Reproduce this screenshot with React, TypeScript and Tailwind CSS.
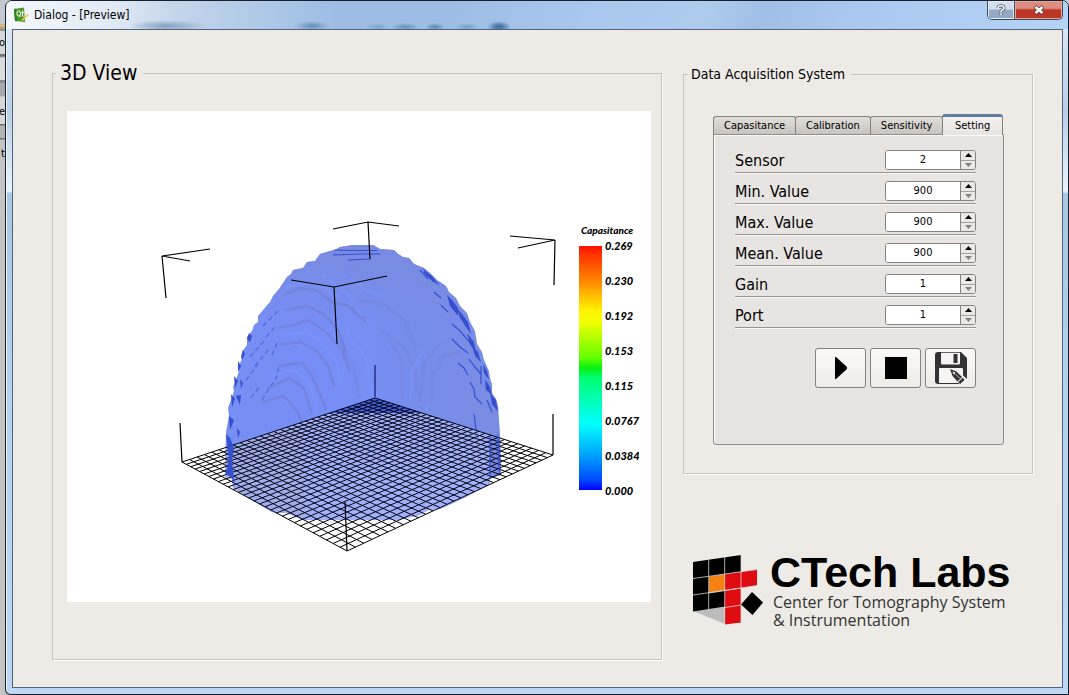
import { useState } from "react";

type Point = [number, number];

const CELLS = 30;
const FLOOR: [Point, Point, Point, Point] = [
  [375, 398],
  [553, 455],
  [347, 551],
  [182, 462],
];

/** Maps the unit square onto the floor quad with perspective. */
function project(u: number, v: number): Point {
  const [[x0, y0], [x1, y1], [x2, y2], [x3, y3]] = FLOOR;
  const dx1 = x1 - x2;
  const dx2 = x3 - x2;
  const sx = x0 - x1 + x2 - x3;
  const dy1 = y1 - y2;
  const dy2 = y3 - y2;
  const sy = y0 - y1 + y2 - y3;
  const det = dx1 * dy2 - dx2 * dy1;
  const g = (sx * dy2 - dx2 * sy) / det;
  const h = (dx1 * sy - sx * dy1) / det;
  const w = g * u + h * v + 1;
  return [
    ((x1 - x0 + g * x1) * u + (x3 - x0 + h * x3) * v + x0) / w,
    ((y1 - y0 + g * y1) * u + (y3 - y0 + h * y3) * v + y0) / w,
  ];
}

const segment = (a: Point, b: Point) =>
  `M${a[0].toFixed(1)} ${a[1].toFixed(1)}L${b[0].toFixed(1)} ${b[1].toFixed(1)}`;

const gridPath = Array.from({ length: CELLS + 1 }, (_, i) => {
  const t = i / CELLS;
  return segment(project(t, 0), project(t, 1)) + segment(project(0, t), project(1, t));
}).join("");

const DOME =
  "M226 432L229 416L228 408L231 400L234 391L233 387L236 380L239 371L238 367L242 359L244 349L247 345L247 337L252 331L254 325L258 322L258 316L264 309L270 302L273 296L279 289L283 283L287 277L291 274L293 270L303 268L307 262L315 261L320 254L330 251L335 250L340 247L353 245H373L380 249L394 250L398 254L403 257L409 258L414 264L424 268L430 273L437 280L446 286L449 292L456 298L460 306L467 313L470 322L475 331L477 344L482 352L484 360L489 371L490 378L492 384V393L496 399L498 406L499 420L500 434L501 475L490 478V484L464 498L440 509L428 510L420 515L402 519L400 520H303L287 513L272 512L250 499L233 488L232 479L225 477Z";

const SCALE = ["0.269", "0.230", "0.192", "0.153", "0.115", "0.0767", "0.0384", "0.000"];

function VolumeView() {
  return (
    <svg viewBox="67 111 584 491" role="img" aria-label="Capasitance volume" className="block h-auto w-full bg-white">
      <defs>
        <linearGradient id="dome" x1="0" y1="0" x2="1" y2="0">
          <stop offset="0" stopColor="#8298f6" />
          <stop offset="0.35" stopColor="#8298fc" />
          <stop offset="0.6" stopColor="#8298f2" />
          <stop offset="1" stopColor="#8596e2" />
        </linearGradient>
        <linearGradient id="cap" x1="0" y1="0" x2="0" y2="1">
          <stop offset="0" stopColor="#8494de" stopOpacity="1" />
          <stop offset="1" stopColor="#8494de" stopOpacity="0" />
        </linearGradient>
        <linearGradient id="scale" x1="0" y1="0" x2="0" y2="1">
          <stop offset="0" stopColor="#ff1000" />
          <stop offset="0.04" stopColor="#ff3800" />
          <stop offset="0.15" stopColor="#ff8c00" />
          <stop offset="0.26" stopColor="#fff000" />
          <stop offset="0.31" stopColor="#f4ff00" />
          <stop offset="0.46" stopColor="#60ff00" />
          <stop offset="0.5" stopColor="#08f010" />
          <stop offset="0.54" stopColor="#00ff70" />
          <stop offset="0.73" stopColor="#00ffff" />
          <stop offset="0.86" stopColor="#00a0ff" />
          <stop offset="0.96" stopColor="#0048ff" />
          <stop offset="1" stopColor="#0000ff" />
        </linearGradient>
        <clipPath id="domeClip">
          <path d={DOME} />
        </clipPath>
      </defs>

      <g clipPath="url(#domeClip)">
        <rect x="220" y="240" width="285" height="285" fill="url(#dome)" />
        <rect x="220" y="240" width="285" height="90" fill="url(#cap)" />
        <g fill="none" stroke="#7c86cc" strokeOpacity="0.6" strokeWidth="2.500" strokeLinejoin="round">
          <path d="M286 294L300 288L318 291L332 302L348 306L366 322" />
          <path d="M286 310L306 306L324 314L338 330L346 352" />
          <path d="M278 328L294 325L308 320L326 332L342 350L350 372" />
          <path d="M279 345L300 342L316 350L328 366L334 386" />
          <path d="M278 366L302 363L312 376L320 394L326 410" />
          <path d="M268 388L290 378L304 388L312 414" />
          <path d="M262 402L284 396L298 412L304 428" />
        </g>
        <g fill="none" stroke="#7c88d0" strokeOpacity="0.3" strokeWidth="4" strokeLinejoin="round">
          <path d="M360 300L384 304L404 320L416 348" />
          <path d="M380 330L402 344L414 368L418 396" />
          <path d="M432 404V376L444 356L462 352" />
          <path d="M420 402L424 364L440 342" />
          <path d="M402 398V360L388 338" />
          <path d="M360 398L354 370L340 340" />
        </g>
        <g fill="none" stroke="#869cff" strokeOpacity="0.6" strokeWidth="3">
          <path d="M286 288L304 282L322 286L340 298" />
          <path d="M280 336L306 332L322 342L336 360L342 386" />
          <path d="M272 376L294 370L308 382L316 404" />
          <path d="M322 274L336 284L352 300L362 316" />
          <path d="M350 278L366 290L384 296" />
          <path d="M348 334L366 358L372 392" />
          <path d="M410 400L412 372L424 350" />
        </g>
        <path d="M220 449L230 446L330 413H422L500 438L510 530H220Z" fill="#b2befd" />
        <path d="M230 446L300 423L306 520L260 512L230 488Z" fill="#b0b9e0" fillOpacity="0.6" />
        <path d="M375 398L330 413H422Z" fill="#4c66e0" />
        <path d="M489 434L501 438V476L489 479Z" fill="#8494e8" />
      </g>

      <path d={gridPath} fill="none" stroke="#000" />
      <path d={DOME} fill="#2038e0" fillOpacity="0.1" />

      <g fill="none" stroke="#3450d0" strokeWidth="1.2">
        <path d="M334 250L350 250.500H377M333 255L358 254H380M348 260L370 259" />
        <path d="M420 270L428 279M424 272L434 282M434 292L441 298M441 305L448 312M452 324L460 331L467 339L474 349M452 339L460 347L468 353M458 363L464 368L468 375M469 359L475 367L481 374M470 382L474 389L475 397L482 404M481 366V384M487 400L492 412M474 414L476 430" />
        <path
          d="M262 400L268 390L276 379L279 366M250 357L264 341M255 366L268 350M246 380L258 364M263 326L278 311M266 337L276 326M251 398L260 386M272 355L278 341"
          strokeDasharray="5 3"
          strokeOpacity="0.6"
        />
      </g>
      <g fill="#3450d0">
        <path d="M447 295L452 300L458 308V316L450 306ZM457 308L462 314L468 322L471 334L466 327L460 318ZM467 333L474 342L476 352L470 344ZM472 346L478 352L481 362L475 356Z" />
        <path d="M483 364L487 371L489 380L484 373ZM485 379L490 387L492 395L486 390ZM490 393L496 400L498 412L492 404ZM422 268L432 276L440 286L430 279Z" />
        <path d="M249 333L252 336L250 342L247 339ZM243 349L245 354L242 360L241 357ZM238 361L241 366L238 372ZM234 376L238 381L235 388ZM240 379L243 383L241 389ZM231 394L235 399L232 407ZM236 396L241 395L240 405ZM229 416L234 420L230 430ZM237 428L240 432L238 438Z" />
        <path d="M226 434L230 438L234 448L232 462L235 487L232 478L226 474L229 458Z" />
        <path d="M489 436L491 438V478H489ZM497 432L500 440V474L498 470Z" fillOpacity="0.6" />
      </g>

      <path
        d="M210 249L162 256L190 261M162 256L166 298M333 229L368 222L399 226M368 222L370 259M510 236L555 240L518 248M555 240L554 285M291 280L334 287L387 276M334 287L337 344M180 423L182 462M553 414V455M345 502L347 551"
        fill="none"
        stroke="#000"
        strokeWidth="1.200"
      />
      <path d="M375 365V397" stroke="#10186c" strokeWidth="1.200" />

      <rect x="579" y="246" width="23" height="244" fill="url(#scale)" />
      <g fill="#000" className="font-['Lato',sans-serif] font-black italic">
        <text x="581" y="234" fontSize="10">
          Capasitance
        </text>
        {SCALE.map((value, i) => (
          <text key={value} x="605" y={250 + i * 35} fontSize="11">
            {value}
          </text>
        ))}
      </g>
    </svg>
  );
}

function SpinRow({ label, initial }: { label: string; initial: number }) {
  const [value, setValue] = useState(initial);
  const id = label.toLowerCase().replace(/\W+/g, "-");
  return (
    <div className="flex h-[31px] items-end justify-between border-b border-[#989490] pb-[2px] shadow-[0_1px_0_#fbfaf9]">
      <label htmlFor={id} className="text-base leading-[18px]">
        {label}
      </label>
      <div className="flex h-5 w-[91px] overflow-hidden rounded-[3px] border border-[#85817c] bg-white">
        <input
          id={id}
          type="number"
          value={value}
          onChange={(e) => setValue(Number(e.target.value))}
          className="w-0 min-w-0 flex-1 bg-white text-center text-[11px] leading-[18px] outline-none [appearance:textfield] [&::-webkit-inner-spin-button]:appearance-none"
        />
        <div className="flex w-[15px] flex-col border-l border-[#85817c] bg-[#ece8e5]">
          <button
            type="button"
            aria-label={`Increase ${label}`}
            onClick={() => setValue(value + 1)}
            className="flex flex-1 items-center justify-center border-b border-[#a5a19d]"
          >
            <svg viewBox="0 0 7 4" className="h-1 w-[7px]">
              <path d="M0 4L3.500 0L7 4Z" fill="#000" />
            </svg>
          </button>
          <button
            type="button"
            aria-label={`Decrease ${label}`}
            onClick={() => setValue(value - 1)}
            className="flex flex-1 items-center justify-center"
          >
            <svg viewBox="0 0 7 4" className="h-1 w-[7px]">
              <path d="M0 0H7L3.500 4Z" fill="#85817e" />
            </svg>
          </button>
        </div>
      </div>
    </div>
  );
}

const ROWS = [
  { label: "Sensor", initial: 2 },
  { label: "Min. Value", initial: 900 },
  { label: "Max. Value", initial: 900 },
  { label: "Mean. Value", initial: 900 },
  { label: "Gain", initial: 1 },
  { label: "Port", initial: 1 },
];

const TABS = ["Capasitance", "Calibration", "Sensitivity", "Setting"];

const ACTION =
  "flex h-10 w-[51px] items-center justify-center rounded-[3px] border border-[#85817c] bg-linear-to-b from-[#fbfaf8] to-[#efebe7]";

function SettingsTabs() {
  return (
    <div>
      <div role="tablist" className="flex h-5 items-end pr-px text-[11px] leading-4">
        {TABS.map((tab) =>
          tab === "Setting" ? (
            <button
              key={tab}
              type="button"
              role="tab"
              aria-selected="true"
              className="relative z-10 -mb-px h-[21px] grow rounded-t-[3px] border-x border-t-[3px] border-x-[#85817c] border-t-[#5f7d9e] bg-linear-to-b from-[#f3f0ee] to-[#e8e4e1]"
            >
              {tab}
            </button>
          ) : (
            <button
              key={tab}
              type="button"
              role="tab"
              aria-selected="false"
              className="-mr-px h-[18px] rounded-t-[3px] border border-b-0 border-[#85817c] bg-linear-to-b from-[#e2deda] to-[#c9c4bf] px-[10px]"
            >
              {tab}
            </button>
          ),
        )}
      </div>
      <div
        role="tabpanel"
        className="rounded-b-[3px] border border-[#918d89] bg-[#e8e4e1] pt-[7px] pr-[27px] pb-14 pl-[21px] shadow-[inset_1px_1px_0_#fbfaf9]"
      >
        {ROWS.map((row) => (
          <SpinRow key={row.label} {...row} />
        ))}
        <div className="mt-5 flex justify-end gap-1">
          <button type="button" aria-label="Start" className={ACTION}>
            <svg viewBox="0 0 12 22" className="h-[22px] w-3">
              <path d="M0 0H1L12 10V12L1 22H0Z" fill="#000" />
            </svg>
          </button>
          <button type="button" aria-label="Stop" className={ACTION}>
            <svg viewBox="0 0 22 22" className="size-[22px]">
              <rect width="22" height="22" fill="#000" />
            </svg>
          </button>
          <button type="button" aria-label="Save" className={ACTION}>
            <svg viewBox="0 0 32 32" className="size-8">
              <path d="M3 0H26L32 6V29Q32 32 29 32H3Q0 32 0 29V3Q0 0 3 0Z" fill="#333336" />
              <path d="M6 0.800H25V11Q25 12.500 23.500 12.500H7.500Q6 12.500 6 11Z" fill="#f7f5f3" />
              <rect x="18.500" y="2" width="4" height="9" fill="#333336" />
              <path d="M5 16H27Q28 16 28 17V31H4V17Q4 16 5 16Z" fill="#f7f5f3" />
              <path d="M24 20L33 28V33H25L22 29Z" fill="#f7f5f3" />
              <path d="M15 17L21.500 19.500L27 25L22.500 29.500L17.500 24Z" fill="#333336" />
              <path d="M17.500 19.500L20.500 20.500L19 23Z" fill="#f7f5f3" />
              <path d="M20.500 22L25 26.500" stroke="#f7f5f3" strokeWidth="0.700" />
              <path d="M27.700 25.700L29.700 27.700L25.200 32L23.200 30.200Z" fill="#333336" />
            </svg>
          </button>
        </div>
      </div>
    </div>
  );
}

function Logo() {
  return (
    <div className="flex items-start gap-[6px] pl-[9px]">
      <svg viewBox="692 554 72 72" className="size-[72px] shrink-0">
        <path d="M693 611L725 606V624Z" fill="#bcbcbc" />
        <path d="M693 562L741 555V604L693 611.500Z" fill="#000" />
        <path d="M709 576.500L725 574V590.500L709 593Z" fill="#f58113" />
        <path d="M725 574L757 569.500V585.500L741 588V622.500L725 624.500Z" fill="#e00b10" />
        <path
          d="M693 578.500L757 569.500M693 595L741 588M708.700 559V610M724.700 557V624M741 555V622M725 607.500L741 605M709 593L757 585.500"
          fill="none"
          stroke="#d8d4d0"
          strokeWidth="0.800"
        />
        <path d="M752 592L763 602.500L752.500 615L741 604.500Z" fill="#000" />
      </svg>
      <div className="whitespace-nowrap">
        <div className="font-['Liberation_Sans',sans-serif] text-[43px] leading-9 font-bold text-black">CTech Labs</div>
        <div className="pt-[3px] pl-[3px] font-['Open_Sans',sans-serif] text-base leading-[18px] text-[#333]">
          Center for Tomography System
          <br />
          &amp; Instrumentation
        </div>
      </div>
    </div>
  );
}

function TitleBar() {
  return (
    <header className="flex h-7 items-start justify-between bg-[radial-gradient(ellipse_12px_6px_at_492px_26px,#4d79ab_30%,transparent),radial-gradient(ellipse_12px_4px_at_460px_26px,#7ea5ca_20%,transparent),radial-gradient(ellipse_10px_4px_at_428px_26px,#6990bb_20%,transparent),radial-gradient(ellipse_14px_4px_at_398px_26px,#7097c0_20%,transparent),radial-gradient(ellipse_12px_4px_at_370px_26px,#86a9cf_20%,transparent),radial-gradient(ellipse_18px_5px_at_305px_25px,#6f93bc_10%,transparent),radial-gradient(ellipse_40px_6px_at_160px_25px,#8ba6c4_10%,transparent),linear-gradient(90deg,#f4f8fc_0,#dfe9f4_110px,#c3d5ea_170px,transparent_330px),linear-gradient(115deg,#9dbde4_42%,#a9c8ed_55%,#aecbed_66%,#9fbfe5_71%,#aac8ee_79%,#b5d3f4_100%)]">
      <div className="flex items-center gap-[5px] pt-[6px] pl-[6px]">
        <svg viewBox="0 0 16 16" className="size-4">
          <path d="M1 2L11 0.500L12 15L2 14Z" fill="#4a9a2c" />
          <path d="M1 2L3 1.700L4 14.300L2 14Z" fill="#2f7a1c" />
          <ellipse cx="5.700" cy="6.500" rx="1.800" ry="2.600" fill="none" stroke="#fff" strokeWidth="1" />
          <path d="M6.300 8L7.500 10M9.500 3.500V8.500Q9.500 9.500 10.700 9.300M8.500 5.500H11" fill="none" stroke="#fff" strokeWidth="1" />
          <path d="M14.500 7L15.500 8L10 13.500L8.500 14L9 12.500Z" fill="#f3cf3f" stroke="#d8b040" strokeWidth="0.300" />
        </svg>
        <h1 className="text-xs leading-4">Dialog - [Preview]</h1>
      </div>
      <div className="mr-[5px] flex h-[19px] overflow-hidden rounded-b-[5px] border border-t-0 border-[#3d4a5c]">
        <button
          type="button"
          aria-label="Help"
          className="flex w-[27px] items-center justify-center border-r border-[#3d4a5c] bg-linear-to-b from-[#d3dfec] from-45% to-[#94a9c4] to-50% shadow-[inset_0_0_0_1px_#e3ecf5]"
        >
          <svg viewBox="0 0 10 12" className="h-3 w-[10px]">
            <path d="M2 4Q2 1.800 5 1.800Q8 1.800 8 4Q8 5.300 6.300 6Q5 6.500 5 8M5 9.300V11" fill="none" stroke="#4a5564" strokeWidth="3.200" />
            <path d="M2 4Q2 1.800 5 1.800Q8 1.800 8 4Q8 5.300 6.300 6Q5 6.500 5 8M5 9.300V11" fill="none" stroke="#fff" strokeWidth="1.600" />
          </svg>
        </button>
        <button
          type="button"
          aria-label="Close"
          className="flex w-[47px] items-center justify-center bg-linear-to-b from-[#dc8d7f] from-40% to-[#bd3524] to-50% shadow-[inset_0_0_0_1px_#e8a79b]"
        >
          <svg viewBox="0 0 12 10" className="h-[10px] w-3">
            <path d="M2 1.500L10 8.500M10 1.500L2 8.500" stroke="#6b3a38" strokeWidth="4" />
            <path d="M2.500 2L9.500 8M9.500 2L2.500 8" stroke="#fff" strokeWidth="2.400" />
          </svg>
        </button>
      </div>
    </header>
  );
}

export default function App() {
  return (
    <div className="flex min-h-screen bg-linear-to-b from-[#c9cbd2] to-[#a8aaad] font-['DejaVu_Sans_Condensed','DejaVu_Sans',sans-serif] text-black">
      <div className="flex w-[5px] shrink-0 flex-col items-end overflow-hidden bg-[linear-gradient(#c4c8d2_0_24px,#d8b878_24px_26px,#8e9094_30px_31px,#d5d7da_31px_54px,#707276_54px_56px,#dcdcdc_58px_80px,#8a8c90_80px_83px,#a8a9aa_83px_96px,#d8d8d8_97px_124px,#6f7073_124px_125px,#b4b4b4_126px_138px,#777_138px_139px,#c4c4c4_140px_100%)] pt-9 text-[11px] leading-[14px]">
        <span>o</span>
        <span className="pt-[55px]">e</span>
        <span className="pt-7">t</span>
      </div>
      <div className="flex min-w-0 flex-1 flex-col overflow-hidden rounded-t-[7px] rounded-bl-[6px] border border-[#16202e] bg-[linear-gradient(#e6eff8_0,#b9cfe6_110px,#e9f3fc_190px,#a9c8e2_193px,#b3d2ee_400px,#bcd8f4_100%)] pb-px pl-px shadow-[inset_1px_1px_0_#eef6fd]">
        <TitleBar />
        <main className="mr-[5px] mb-[5px] ml-[5px] flex flex-1 items-start gap-[21px] border border-[#4d6580] bg-[#eeebe6] pt-[31px] pr-[29px] pb-[27px] pl-[39px]">
          <fieldset className="min-w-0 flex-1 border border-[#c6c3be] pt-[26px] pr-[10px] pb-[57px] pl-[14px] shadow-[1px_1px_0_#fff]">
            <legend className="-ml-[11px] pr-[6px] pl-1 text-[21px] leading-6">3D View</legend>
            <VolumeView />
          </fieldset>
          <div className="w-[350px] shrink-0">
            <fieldset className="min-w-0 border border-[#c6c3be] pt-[27px] pr-[28px] pb-[28px] pl-[29px] shadow-[1px_1px_0_#fff]">
              <legend className="-ml-[25px] pr-[6px] pl-[3px] text-sm leading-[26px]">Data Acquisition System</legend>
              <SettingsTabs />
            </fieldset>
            <div className="mt-20">
              <Logo />
            </div>
          </div>
        </main>
      </div>
    </div>
  );
}
